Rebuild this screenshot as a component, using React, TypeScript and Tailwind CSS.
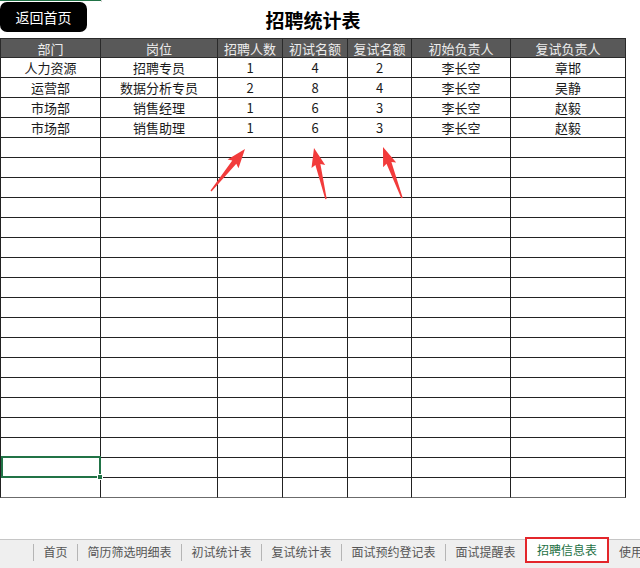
import React from 'react';

const headers = ['部门', '岗位', '招聘人数', '初试名额', '复试名额', '初始负责人', '复试负责人'];

const data = [
  ['人力资源', '招聘专员', '1', '4', '2', '李长空', '章邯'],
  ['运营部', '数据分析专员', '2', '8', '4', '李长空', '吴静'],
  ['市场部', '销售经理', '1', '6', '3', '李长空', '赵毅'],
  ['市场部', '销售助理', '1', '6', '3', '李长空', '赵毅'],
];

const rows = [...data, ...Array.from({ length: 18 }, () => Array(7).fill(''))];

const tabs = ['首页', '简历筛选明细表', '初试统计表', '复试统计表', '面试预约登记表', '面试提醒表'];

const gridCols = 'grid grid-cols-[101px_117px_65px_65px_64px_99px_115px]';

// tapered red arrow, tail -> tip
const arrowPoints = (x1: number, y1: number, x2: number, y2: number) => {
  const dx = x2 - x1;
  const dy = y2 - y1;
  const len = Math.hypot(dx, dy);
  const ux = dx / len;
  const uy = dy / len;
  const nx = -uy;
  const ny = ux;
  const head = 17;
  const bx = x2 - ux * head;
  const by = y2 - uy * head;
  const pts: [number, number][] = [
    [x1 + nx * 0.7, y1 + ny * 0.7],
    [bx + nx * 2.6, by + ny * 2.6],
    [bx - ux * 2 + nx * 7, by - uy * 2 + ny * 7],
    [x2, y2],
    [bx - ux * 2 - nx * 7, by - uy * 2 - ny * 7],
    [bx - nx * 2.6, by - ny * 2.6],
    [x1 - nx * 0.7, y1 - ny * 0.7],
  ];
  return pts.map((p) => p.map((v) => v.toFixed(1)).join(',')).join(' ');
};

const Arrows = () => (
  <svg className="absolute inset-0 pointer-events-none z-20" width={640} height={568} viewBox="0 0 640 568">
    <polygon points={arrowPoints(211, 191, 245, 149)} fill="#f23b3b" />
    <polygon points={arrowPoints(326, 199, 314, 148)} fill="#f23b3b" />
    <polygon points={arrowPoints(402, 198, 383, 147)} fill="#f23b3b" />
  </svg>
);

const App = () => {
  return (
    <div className="relative w-[640px] h-[568px] overflow-hidden bg-white flex flex-col font-['Noto_Sans_CJK_SC',sans-serif]">
      {/* sheet grid stub above */}
      <div className="h-[2px] flex shrink-0">
        <div className="w-[101px] h-[1px] bg-[#217346]" />
        <div className="flex-1 border-l border-[#d4d4d4]" />
      </div>

      <div className="w-[626px] h-[36px] grid grid-cols-[1fr_auto_1fr] items-start shrink-0">
        <button className="justify-self-start w-[87px] h-[30px] bg-black text-white text-[14px] leading-none rounded-[7px] flex items-center justify-center">
          返回首页
        </button>
        <h1 className="h-[36px] leading-[36px] text-[19px] font-bold text-black">招聘统计表</h1>
        <div />
      </div>

      <div className="w-[626px] shrink-0">
        <div className={`${gridCols} h-[20px] bg-[#595959] border-t border-[#2a2a2a]`}>
          {headers.map((h, i) => (
            <div
              key={h}
              className={`flex items-center justify-center text-[13px] leading-none text-[#ececec] border-r border-b border-[#2a2a2a] ${i === 0 ? 'border-l' : ''}`}
            >
              {h}
            </div>
          ))}
        </div>
        {rows.map((r, ri) => (
          <div key={ri} className={`${gridCols} h-[20px]`}>
            {r.map((c, ci) => (
              <div
                key={ci}
                className={`relative flex items-center justify-center text-[13px] leading-none text-[#1a1a1a] border-r border-b ${
                  ri === rows.length - 1 ? 'border-b-[#6b6b6b]' : 'border-b-[#222]'
                } border-r-[#222] ${ci === 0 ? 'border-l border-l-[#222]' : ''}`}
              >
                {c}
                {ri === 20 && ci === 0 && (
                  <div className="absolute left-0 top-[-2px] right-[-1px] bottom-[-1px] border-2 border-[#217346] z-10">
                    <div className="absolute right-[-4px] bottom-[-4px] w-[6px] h-[6px] bg-[#217346] border border-white" />
                  </div>
                )}
              </div>
            ))}
          </div>
        ))}
      </div>

      <div className="flex-1" />

      <div className="h-[29px] shrink-0 bg-[#efefef] border-t border-[#c6c6c6] flex items-start pl-[33px] text-[12px] leading-none text-[#555] whitespace-nowrap">
        {tabs.map((t) => (
          <div key={t} className="flex items-center h-[24px]">
            <div className="w-px h-[17px] bg-[#b5b5b5]" />
            <span className="px-[9.5px]">{t}</span>
          </div>
        ))}
        <div className="-mt-[3px] h-[26px] px-[10px] flex items-center bg-white border-2 border-[#e3262b] text-[#1e7145]">
          招聘信息表
        </div>
        <div className="flex items-center h-[24px] pl-[10px]">使用</div>
      </div>

      <Arrows />
    </div>
  );
};

export default App;
